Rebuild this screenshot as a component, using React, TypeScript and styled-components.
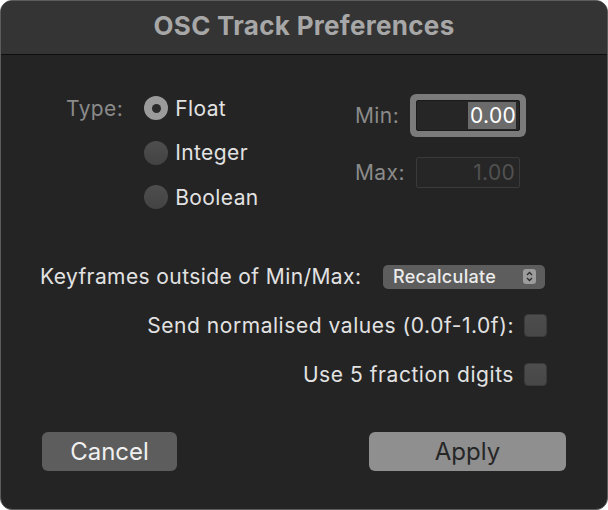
import React from "react";
import styled, { createGlobalStyle } from "styled-components";

const Global = createGlobalStyle`
  html, body { margin: 0; padding: 0; background: #ffffff; }
  body { font-family: Inter, "Liberation Sans", Arial, sans-serif; }
  * { box-sizing: border-box; }
`;

const Window = styled.div`
  width: 608px;
  height: 510px;
  border-radius: 12px;
  border: 1px solid #5c5c5c;
  background: #242424;
  overflow: hidden;
  display: flex;
  flex-direction: column;
`;

const TitleBar = styled.div`
  height: 54px;
  flex: none;
  background: #343434;
  border-bottom: 1px solid #0e0e0e;
  display: flex;
  align-items: center;
  justify-content: center;
  color: #a7a7a7;
  font-weight: 700;
  font-size: 26px;
  letter-spacing: 0.3px;
  padding-bottom: 4px;
`;

const Body = styled.div`
  flex: 1;
  display: flex;
  flex-direction: column;
  padding: 31px 41px 0 39px;
`;

const TopSection = styled.div`
  display: grid;
  grid-template-columns: 290px auto;
  align-items: start;
  padding-left: 26px;
`;

const TypeGroup = styled.div`
  display: grid;
  grid-template-columns: auto auto;
  justify-content: start;
  column-gap: 21px;
  grid-auto-rows: 44.5px;
  align-items: center;
`;

const DimLabel = styled.span`
  font-size: 21px;
  letter-spacing: 0.4px;
  color: #8a8a8a;
`;

const RadioRow = styled.label`
  display: flex;
  align-items: center;
  gap: 7px;
  font-size: 21px;
  letter-spacing: 0.4px;
  color: #e2e2e2;
  grid-column: 2;
`;

const Radio = styled.span<{ $on?: boolean }>`
  width: 24px;
  height: 24px;
  border-radius: 50%;
  background: ${(p) => (p.$on ? "#9b9b9b" : "linear-gradient(#4e4e4e, #434343)")};
  display: flex;
  align-items: center;
  justify-content: center;
  &::after {
    content: "";
    width: 9px;
    height: 9px;
    border-radius: 50%;
    background: #2a2a2a;
    display: ${(p) => (p.$on ? "block" : "none")};
  }
`;

const MinMaxGroup = styled.div`
  margin-top: 7px;
  margin-left: -1px;
  display: grid;
  grid-template-columns: 48px 104px;
  column-gap: 13px;
  grid-template-rows: 44px 31px;
  row-gap: 20px;
  align-items: center;
`;

const Field = styled.div<{ $focused?: boolean }>`
  width: 104px;
  height: 31px;
  border: 1px solid ${(p) => (p.$focused ? "#1b1b1b" : "#3a3a3a")};
  border-radius: 2px;
  background: #262626;
  box-shadow: ${(p) => (p.$focused ? "0 0 0 6px #7b7b7b" : "none")};
  display: flex;
  align-items: stretch;
  justify-content: flex-end;
  padding: ${(p) => (p.$focused ? "1px 3px 1px 0" : "0 4px 0 0")};
  font-size: 21px;
  letter-spacing: 0.3px;
  color: ${(p) => (p.$focused ? "#ffffff" : "#515151")};
`;

const Selection = styled.span`
  background: #6b6b6b;
  display: flex;
  align-items: center;
  padding-left: 2px;
`;

const FieldText = styled.span`
  display: flex;
  align-items: center;
`;

const KeyRow = styled.div`
  margin-top: 45px;
  display: flex;
  align-items: center;
  padding-right: 21px;
  justify-content: space-between;
`;

const Text = styled.span<{ $wide?: boolean }>`
  font-size: 21px;
  line-height: 24px;
  color: #e2e2e2;
  letter-spacing: ${(p) => (p.$wide ? "0.55px" : "0.4px")};
`;

const Popup = styled.div`
  width: 162px;
  height: 24px;
  border-radius: 5px;
  background: #5d5d5d;
  display: flex;
  align-items: center;
  justify-content: space-between;
  padding: 0 9px 0 10px;
  font-size: 18px;
  letter-spacing: 0.3px;
  font-weight: 500;
  color: #ececec;
`;

const Stepper = styled.span`
  width: 13px;
  height: 15px;
  border-radius: 3px;
  background: #9c9c9c;
  display: flex;
  align-items: center;
  justify-content: center;
`;

const CheckRow = styled.label`
  margin-top: 25px;
  display: flex;
  align-items: center;
  justify-content: flex-end;
  gap: 10px;
  padding-right: 19px;
`;

const Checkbox = styled.span`
  width: 23px;
  height: 23px;
  border-radius: 4px;
  background: linear-gradient(#4d4d4d, #474747);
  border: 1px solid #3b3b3b;
`;

const ButtonRow = styled.div`
  margin-top: 45px;
  display: flex;
  justify-content: space-between;
  padding-left: 2px;
`;

const Button = styled.button<{ $primary?: boolean }>`
  height: 39px;
  width: ${(p) => (p.$primary ? "197px" : "135px")};
  border: none;
  border-radius: 6px;
  background: ${(p) => (p.$primary ? "#8f8f8f" : "#5d5d5d")};
  color: ${(p) => (p.$primary ? "#262626" : "#f0f0f0")};
  font-family: inherit;
  font-size: 24px;
  padding: 0;
`;

export default function App() {
  return (
    <>
      <Global />
      <Window>
        <TitleBar>OSC Track Preferences</TitleBar>
        <Body>
          <TopSection>
            <TypeGroup>
              <DimLabel>Type:</DimLabel>
              <RadioRow>
                <Radio $on />
                Float
              </RadioRow>
              <RadioRow>
                <Radio />
                Integer
              </RadioRow>
              <RadioRow>
                <Radio />
                Boolean
              </RadioRow>
            </TypeGroup>
            <MinMaxGroup>
              <DimLabel>Min:</DimLabel>
              <Field $focused>
                <Selection>0.00</Selection>
              </Field>
              <DimLabel>Max:</DimLabel>
              <Field>
                <FieldText>1.00</FieldText>
              </Field>
            </MinMaxGroup>
          </TopSection>
          <KeyRow>
            <Text>Keyframes outside of Min/Max:</Text>
            <Popup>
              Recalculate
              <Stepper>
                <svg width="7" height="11" viewBox="0 0 7 11">
                  <path d="M1 4 L3.5 1.5 L6 4 M1 7 L3.5 9.5 L6 7" fill="none" stroke="#2b2b2b" strokeWidth="1.3" />
                </svg>
              </Stepper>
            </Popup>
          </KeyRow>
          <CheckRow>
            <Text $wide>Send normalised values (0.0f-1.0f):</Text>
            <Checkbox />
          </CheckRow>
          <CheckRow>
            <Text $wide>Use 5 fraction digits</Text>
            <Checkbox />
          </CheckRow>
          <ButtonRow>
            <Button>Cancel</Button>
            <Button $primary>Apply</Button>
          </ButtonRow>
        </Body>
      </Window>
    </>
  );
}
